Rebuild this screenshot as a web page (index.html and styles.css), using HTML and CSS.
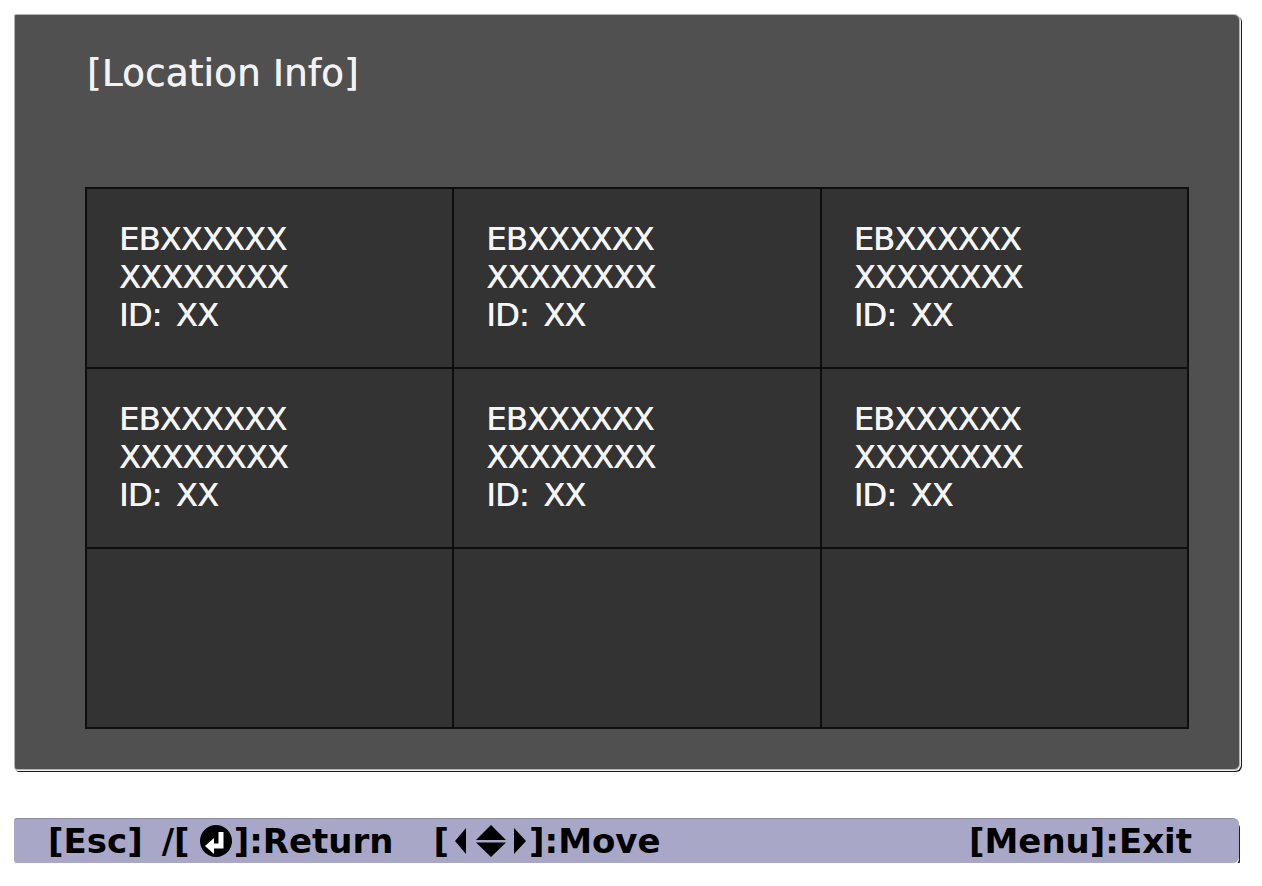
FILE: index.html
```html
<!DOCTYPE html>
<html lang="en">
<head>
    <meta charset="UTF-8">
    <title>Location Info</title>
    <link rel="stylesheet" href="styles.css">
</head>
<body>
    <div class="screen">
        <!-- Основная панель -->
        <div class="panel">
            <h1 class="panel-title">[Location Info]</h1>
            <div class="grid">
                <div class="cell"><p>EBXXXXXX</p><p>XXXXXXXX</p><p>ID: XX</p></div>
                <div class="cell"><p>EBXXXXXX</p><p>XXXXXXXX</p><p>ID: XX</p></div>
                <div class="cell"><p>EBXXXXXX</p><p>XXXXXXXX</p><p>ID: XX</p></div>
                <div class="cell"><p>EBXXXXXX</p><p>XXXXXXXX</p><p>ID: XX</p></div>
                <div class="cell"><p>EBXXXXXX</p><p>XXXXXXXX</p><p>ID: XX</p></div>
                <div class="cell"><p>EBXXXXXX</p><p>XXXXXXXX</p><p>ID: XX</p></div>
                <div class="cell"></div>
                <div class="cell"></div>
                <div class="cell"></div>
            </div>
        </div>

        <!-- Строка подсказок -->
        <div class="guide">
            <span class="guide-item">[Esc]<span class="slash">/[</span><svg class="icon-enter" viewBox="0 0 32 32" width="32" height="32"><circle cx="16" cy="16" r="16" fill="#000"/><path d="M21 7 V21 H12" fill="none" stroke="#fff" stroke-width="5"/><polygon points="14,13 5,21 14,29" fill="#fff"/></svg>]:Return</span>
            <span class="guide-item">[<svg class="icon-move" viewBox="0 0 80 32" width="80" height="32"><polygon points="18,3 18,29 7,16" fill="#000"/><polygon points="28,15 43,0 58,15" fill="#000"/><polygon points="28,17.5 58,17.5 43,32" fill="#000"/><polygon points="66,3 78,16 66,29" fill="#000"/></svg>]:Move</span>
            <span class="guide-item guide-exit">[Menu]:Exit</span>
        </div>
    </div>
</body>
</html>
```

FILE: styles.css
```css
/* Общие стили */
body {
    margin: 0;
    background: #fff;
    font-family: "DejaVu Sans", Verdana, sans-serif;
}

.screen {
    width: 1226px;
    padding: 14px 0 0 14px;
}

.panel {
    box-sizing: border-box;
    width: 1226px;
    height: 756px;
    padding: 40px 0 0 70px;
    background: #505050;
    border: 1px solid #b4b4b4;
    border-radius: 2px 6px 6px 3px;
    box-shadow: 1px 1px 0 #eee, 2px 2px 0 #1c1c1c;
}

.panel-title {
    margin: 0 0 0 2px;
    height: 38px;
    font-size: 37px;
    line-height: 38px;
    font-weight: normal;
    letter-spacing: 0.3px;
    color: #f2f2f2;
    text-shadow: 0.6px 0 0 #f2f2f2;
}

.grid {
    box-sizing: border-box;
    width: 1104px;
    height: 542px;
    margin-top: 94px;
    padding: 2px;
    display: grid;
    grid-template-columns: repeat(3, 1fr);
    grid-template-rows: repeat(3, 1fr);
    gap: 2px;
    background: #0e0e0e;
}

.cell {
    padding: 31px 0 0 32px;
    background: #333;
}

.cell p {
    margin: 0;
    font-size: 32px;
    line-height: 38px;
    letter-spacing: -0.8px;
    word-spacing: 5px;
    color: #f5f5f5;
    text-shadow: 0.5px 0 0 #f5f5f5;
}

/* Подсказки внизу */
.guide {
    box-sizing: border-box;
    width: 1225px;
    height: 45px;
    margin-top: 48px;
    padding: 0 47px 0 34px;
    display: flex;
    align-items: center;
    gap: 40px;
    background: #a9a7c8;
    border-top: 1px solid #8e8ca0;
    border-radius: 3px 6px 6px 3px;
    box-shadow: 0 2px 0 #fff, 1px 4px 0 #222;
    font-size: 34px;
    font-weight: bold;
    line-height: 44px;
    color: #000;
}

.guide-item {
    display: flex;
    align-items: center;
    white-space: pre;
}

.guide-item svg {
    flex-shrink: 0;
}

.slash {
    margin-left: 19px;
}

.icon-enter {
    margin: 0 2px 0 10px;
}

.icon-move {
    margin: 0 1px 0 -1px;
}

.guide-exit {
    margin-left: auto;
}
```
